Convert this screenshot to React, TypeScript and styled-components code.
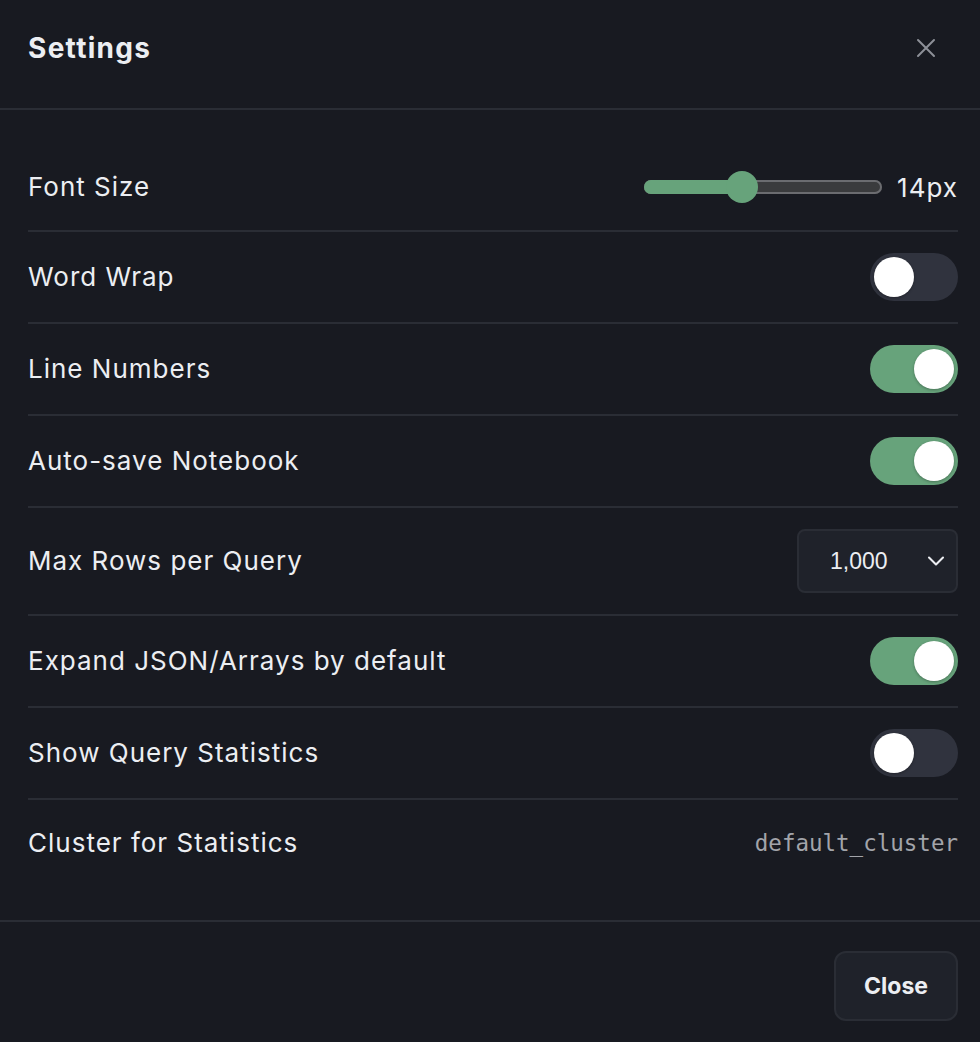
import React, { useState } from 'react';
import styled, { createGlobalStyle } from 'styled-components';

const cssVarsLocal = {
  background: '#181a21',
  border: '#2a2d35',
  text: '#eceef2',
  muted: '#8d9098',
  green: '#67a37b',
  toggleOff: '#30333e',
  control: '#1f222a'
};

const GlobalStyle = createGlobalStyle`
  html, body {
    margin: 0;
    padding: 0;
    background: ${cssVarsLocal.background};
  }

  body {
    font-family: Inter, "Noto Sans", sans-serif;
    color: ${cssVarsLocal.text};
  }
`;

/**
 * Modal frame filling the viewport.
 */
const Frame = styled.div`
  display: flex;
  flex-direction: column;
  width: 980px;
  min-height: 1042px;
  background: ${cssVarsLocal.background};
  box-sizing: border-box;

  & > * {
    flex-shrink: 0;
  }
`;

const Header = styled.header`
  display: flex;
  justify-content: space-between;
  align-items: center;
  height: 110px;
  padding: 0 42px 12px 28px;
  box-sizing: border-box;
  border-bottom: 2px solid ${cssVarsLocal.border};
`;

const Title = styled.h1`
  margin: 0;
  font-size: 28px;
  font-weight: 700;
  letter-spacing: 1.3px;
`;

const CloseIcon = styled.button`
  display: flex;
  padding: 0;
  border: 0;
  background: none;
  color: ${cssVarsLocal.muted};
  cursor: pointer;
`;

const Body = styled.div`
  display: flex;
  flex-direction: column;
  padding: 55px 22px 34px 28px;
  border-bottom: 2px solid ${cssVarsLocal.border};
`;

const Row = styled.div<{ $last?: boolean }>`
  display: flex;
  justify-content: space-between;
  align-items: center;
  padding: 21px 0;
  border-bottom: ${p => (p.$last ? 'none' : `2px solid ${cssVarsLocal.border}`)};

  &:first-child {
    padding-top: 0;
  }
`;

const Label = styled.span`
  font-size: 26px;
  line-height: 44px;
  letter-spacing: 1px;
`;

const SliderWrap = styled.div`
  display: flex;
  align-items: center;
  gap: 15px;
`;

const Track = styled.div`
  position: relative;
  width: 238px;
  height: 14px;
  border-radius: 7px;
  background: #3a3b3d;
  box-shadow: inset 0 0 0 2px #6b6c70;
`;

const Fill = styled.div`
  height: 100%;
  border-radius: 7px 0 0 7px;
  background: ${cssVarsLocal.green};
`;

const Thumb = styled.div`
  position: absolute;
  top: 50%;
  width: 32px;
  height: 32px;
  border-radius: 50%;
  background: ${cssVarsLocal.green};
  transform: translate(-50%, -50%);
`;

const SliderValue = styled.span`
  font-size: 26px;
  letter-spacing: 1px;
`;

const ToggleTrack = styled.button<{ $on: boolean }>`
  display: flex;
  justify-content: ${p => (p.$on ? 'flex-end' : 'flex-start')};
  align-items: center;
  width: 88px;
  height: 48px;
  padding: 4px;
  border: 0;
  border-radius: 24px;
  background: ${p => (p.$on ? cssVarsLocal.green : cssVarsLocal.toggleOff)};
  box-sizing: border-box;
  cursor: pointer;
`;

const Knob = styled.span`
  width: 40px;
  height: 40px;
  border-radius: 50%;
  background: #ffffff;
  box-shadow: 0 1px 3px rgba(0, 0, 0, 0.3);
`;

const Select = styled.div`
  display: flex;
  align-items: center;
  justify-content: space-between;
  width: 161px;
  height: 64px;
  padding: 0 6px 0 31px;
  box-sizing: border-box;
  border: 2px solid ${cssVarsLocal.border};
  border-radius: 8px;
  background: ${cssVarsLocal.control};
  font-family: "Liberation Sans", Arial, sans-serif;
  font-size: 23px;
`;

const Mono = styled.span`
  font-family: "DejaVu Sans Mono", "Liberation Mono", monospace;
  font-size: 22.5px;
  color: #a2a4aa;
`;

const Footer = styled.footer`
  display: flex;
  justify-content: flex-end;
  padding: 29px 22px 22px;
`;

const CloseButton = styled.button`
  width: 124px;
  height: 70px;
  border: 2px solid ${cssVarsLocal.border};
  border-radius: 12px;
  background: ${cssVarsLocal.control};
  color: ${cssVarsLocal.text};
  font-family: Inter, "Noto Sans", sans-serif;
  font-size: 23px;
  font-weight: 700;
  cursor: pointer;
`;

const Toggle = ({ initial }: { initial: boolean }) => {
  const [on, setOn] = useState(initial);
  return (
    <ToggleTrack $on={on} onClick={() => setOn(!on)}>
      <Knob />
    </ToggleTrack>
  );
};

export default function App() {
  const pct = 41;
  return (
    <>
      <GlobalStyle />
      <Frame>
        <Header>
          <Title>Settings</Title>
          <CloseIcon aria-label="Close">
            <svg width="24" height="24" viewBox="0 0 24 24" fill="none" stroke="currentColor" strokeWidth="2" strokeLinecap="round">
              <path d="M4 4l16 16M20 4L4 20" />
            </svg>
          </CloseIcon>
        </Header>
        <Body>
          <Row>
            <Label>Font Size</Label>
            <SliderWrap>
              <Track>
                <Fill style={{ width: `${pct}%` }} />
                <Thumb style={{ left: `${pct}%` }} />
              </Track>
              <SliderValue>14px</SliderValue>
            </SliderWrap>
          </Row>
          <Row>
            <Label>Word Wrap</Label>
            <Toggle initial={false} />
          </Row>
          <Row>
            <Label>Line Numbers</Label>
            <Toggle initial />
          </Row>
          <Row>
            <Label>Auto-save Notebook</Label>
            <Toggle initial />
          </Row>
          <Row>
            <Label>Max Rows per Query</Label>
            <Select>
              <span>1,000</span>
              <svg width="28" height="28" viewBox="0 0 24 24" fill="none" stroke="currentColor" strokeWidth="1.8" strokeLinecap="round" strokeLinejoin="round">
                <path d="M6 9l6 6 6-6" />
              </svg>
            </Select>
          </Row>
          <Row>
            <Label>Expand JSON/Arrays by default</Label>
            <Toggle initial />
          </Row>
          <Row>
            <Label>Show Query Statistics</Label>
            <Toggle initial={false} />
          </Row>
          <Row $last>
            <Label>Cluster for Statistics</Label>
            <Mono>default_cluster</Mono>
          </Row>
        </Body>
        <Footer>
          <CloseButton>Close</CloseButton>
        </Footer>
      </Frame>
    </>
  );
}
